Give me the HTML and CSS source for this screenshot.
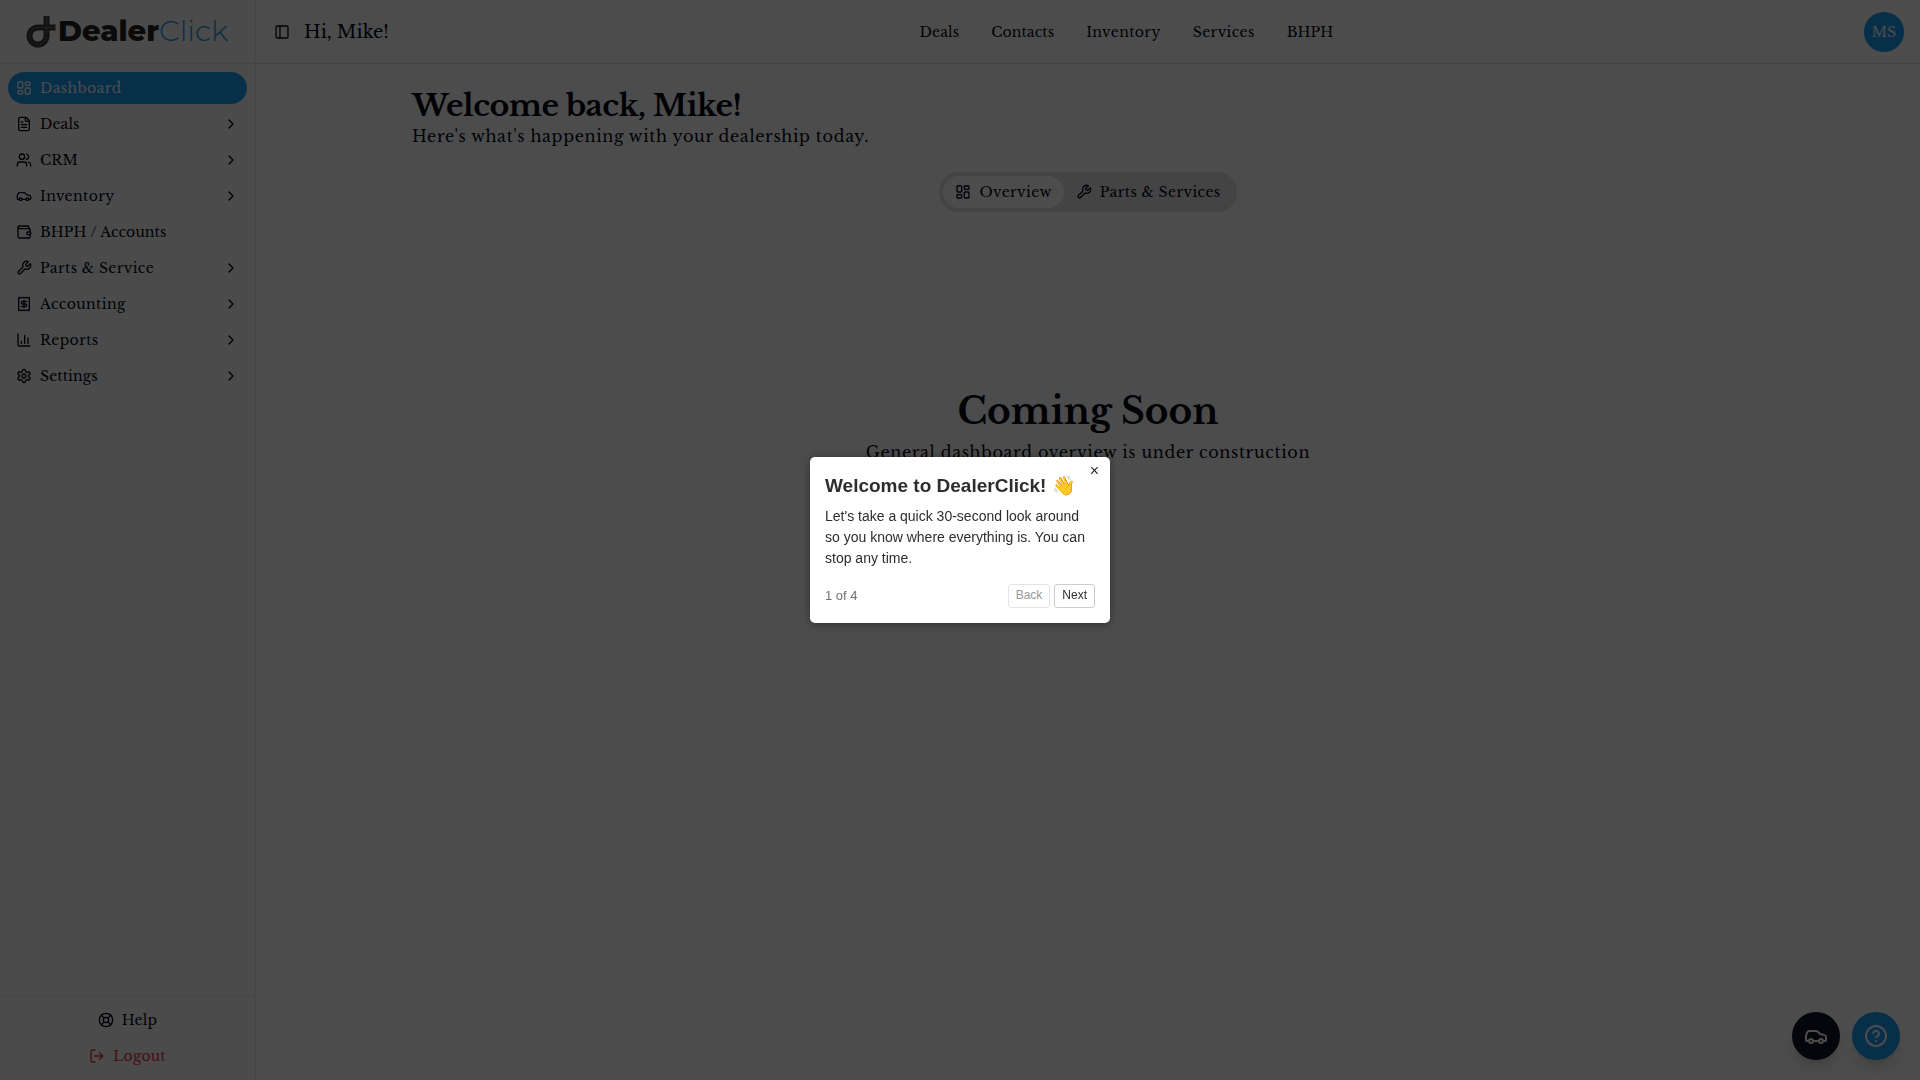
FILE: index.html
```
<!DOCTYPE html>
<html lang="en">
<head>
    <meta charset="UTF-8">
    <meta name="viewport" content="width=device-width, initial-scale=1.0">
    <title>DealerClick - Dashboard</title>
    <link rel="stylesheet" href="styles.css">
</head>
<body>
    <!-- Shared icons -->
    <svg class="sprite" xmlns="http://www.w3.org/2000/svg">
        <symbol id="i-dashboard" viewBox="0 0 24 24"><rect width="7" height="9" x="3" y="3" rx="1"/><rect width="7" height="5" x="14" y="3" rx="1"/><rect width="7" height="9" x="14" y="12" rx="1"/><rect width="7" height="5" x="3" y="16" rx="1"/></symbol>
        <symbol id="i-file" viewBox="0 0 24 24"><path d="M15 2H6a2 2 0 0 0-2 2v16a2 2 0 0 0 2 2h12a2 2 0 0 0 2-2V7Z"/><path d="M14 2v4a2 2 0 0 0 2 2h4M10 9H8M16 13H8M16 17H8"/></symbol>
        <symbol id="i-users" viewBox="0 0 24 24"><path d="M16 21v-2a4 4 0 0 0-4-4H6a4 4 0 0 0-4 4v2"/><circle cx="9" cy="7" r="4"/><path d="M22 21v-2a4 4 0 0 0-3-3.870M16 3.130a4 4 0 0 1 0 7.750"/></symbol>
        <symbol id="i-car" viewBox="0 0 24 24"><path d="M19 17h2c.6 0 1-.4 1-1v-3c0-.9-.7-1.700-1.500-1.900C18.700 10.600 16 10 16 10s-1.300-1.400-2.200-2.300c-.5-.4-1.100-.7-1.800-.7H5c-.6 0-1.100.4-1.400.9l-1.400 2.900A3.700 3.700 0 0 0 2 12v4c0 .6.4 1 1 1h2M9 17h6"/><circle cx="7" cy="17" r="2"/><circle cx="17" cy="17" r="2"/></symbol>
        <symbol id="i-wallet" viewBox="0 0 24 24"><path d="M19 7V4a1 1 0 0 0-1-1H5a2 2 0 0 0 0 4h15a1 1 0 0 1 1 1v4h-3a2 2 0 0 0 0 4h3a1 1 0 0 0 1-1v-2a1 1 0 0 0-1-1"/><path d="M3 5v14a2 2 0 0 0 2 2h15a1 1 0 0 0 1-1v-4"/></symbol>
        <symbol id="i-wrench" viewBox="0 0 24 24"><path d="M14.700 6.300a1 1 0 0 0 0 1.400l1.600 1.600a1 1 0 0 0 1.400 0l3.770-3.770a6 6 0 0 1-7.940 7.940l-6.910 6.910a2.120 2.120 0 0 1-3-3l6.910-6.910a6 6 0 0 1 7.940-7.940l-3.760 3.760z"/></symbol>
        <symbol id="i-receipt" viewBox="0 0 24 24"><path d="M4 2v20l2-1 2 1 2-1 2 1 2-1 2 1 2-1 2 1V2l-2 1-2-1-2 1-2-1-2 1-2-1-2 1Z"/><path d="M16 8h-6a2 2 0 1 0 0 4h4a2 2 0 1 1 0 4H8M12 17.500v-11"/></symbol>
        <symbol id="i-chart" viewBox="0 0 24 24"><path d="M3 3v16a2 2 0 0 0 2 2h16M18 17V9M13 17V5M8 17v-3"/></symbol>
        <symbol id="i-settings" viewBox="0 0 24 24"><path d="M12.220 2h-.44a2 2 0 0 0-2 2v.18a2 2 0 0 1-1 1.730l-.43.25a2 2 0 0 1-2 0l-.15-.08a2 2 0 0 0-2.730.73l-.22.38a2 2 0 0 0 .73 2.730l.15.1a2 2 0 0 1 1 1.720v.51a2 2 0 0 1-1 1.740l-.15.09a2 2 0 0 0-.73 2.730l.22.38a2 2 0 0 0 2.730.73l.15-.08a2 2 0 0 1 2 0l.43.25a2 2 0 0 1 1 1.730V20a2 2 0 0 0 2 2h.44a2 2 0 0 0 2-2v-.18a2 2 0 0 1 1-1.730l.43-.25a2 2 0 0 1 2 0l.15.08a2 2 0 0 0 2.730-.73l.22-.39a2 2 0 0 0-.73-2.730l-.15-.08a2 2 0 0 1-1-1.740v-.5a2 2 0 0 1 1-1.740l.15-.09a2 2 0 0 0 .73-2.730l-.22-.38a2 2 0 0 0-2.730-.73l-.15.08a2 2 0 0 1-2 0l-.43-.25a2 2 0 0 1-1-1.730V4a2 2 0 0 0-2-2z"/><circle cx="12" cy="12" r="3"/></symbol>
        <symbol id="i-chevron" viewBox="0 0 24 24"><path d="m9 18 6-6-6-6"/></symbol>
        <symbol id="i-panel" viewBox="0 0 24 24"><rect width="18" height="18" x="3" y="3" rx="2"/><path d="M9 3v18"/></symbol>
        <symbol id="i-life" viewBox="0 0 24 24"><circle cx="12" cy="12" r="10"/><path d="m4.930 4.930 4.240 4.240M14.830 9.170l4.240-4.240M14.830 14.830l4.240 4.240M9.170 14.830l-4.240 4.240"/><circle cx="12" cy="12" r="4"/></symbol>
        <symbol id="i-logout" viewBox="0 0 24 24"><path d="m16 17 5-5-5-5M21 12H9M9 21H5a2 2 0 0 1-2-2V5a2 2 0 0 1 2-2h4"/></symbol>
        <symbol id="i-help" viewBox="0 0 24 24"><circle cx="12" cy="12" r="10"/><path d="M9.090 9a3 3 0 0 1 5.830 1c0 2-3 3-3 3M12 17h.01"/></symbol>
    </svg>

    <div class="app">
        <aside class="sidebar">
            <div class="brand">
                <svg class="logo" width="206" height="40" viewBox="0 0 206 40">
                    <path class="road" d="M21.500 4v20a8.500 8.500 0 1 1-8.500-8.500h17.500"/>
                    <path class="road-line" d="M21.500 4v20a8.500 8.500 0 1 1-8.500-8.500h17.500"/>
                    <text class="logo-dealer" x="33" y="29" textLength="101" lengthAdjust="spacingAndGlyphs">Dealer</text>
                    <text class="logo-click" x="134" y="29" textLength="69" lengthAdjust="spacingAndGlyphs">Click</text>
                </svg>
            </div>
            <nav class="menu">
                <a class="menu-item active spaced"><svg class="icon"><use href="#i-dashboard"/></svg><span>Dashboard</span></a>
                <a class="menu-item"><svg class="icon"><use href="#i-file"/></svg><span>Deals</span><svg class="icon chevron"><use href="#i-chevron"/></svg></a>
                <a class="menu-item"><svg class="icon"><use href="#i-users"/></svg><span>CRM</span><svg class="icon chevron"><use href="#i-chevron"/></svg></a>
                <a class="menu-item spaced"><svg class="icon"><use href="#i-car"/></svg><span>Inventory</span><svg class="icon chevron"><use href="#i-chevron"/></svg></a>
                <a class="menu-item"><svg class="icon"><use href="#i-wallet"/></svg><span>BHPH / Accounts</span></a>
                <a class="menu-item spaced"><svg class="icon"><use href="#i-wrench"/></svg><span>Parts &amp; Service</span><svg class="icon chevron"><use href="#i-chevron"/></svg></a>
                <a class="menu-item spaced"><svg class="icon"><use href="#i-receipt"/></svg><span>Accounting</span><svg class="icon chevron"><use href="#i-chevron"/></svg></a>
                <a class="menu-item spaced"><svg class="icon"><use href="#i-chart"/></svg><span>Reports</span><svg class="icon chevron"><use href="#i-chevron"/></svg></a>
                <a class="menu-item"><svg class="icon"><use href="#i-settings"/></svg><span>Settings</span><svg class="icon chevron"><use href="#i-chevron"/></svg></a>
            </nav>
            <div class="sidebar-footer">
                <a class="footer-link"><svg class="icon"><use href="#i-life"/></svg><span>Help</span></a>
                <a class="footer-link logout"><svg class="icon"><use href="#i-logout"/></svg><span>Logout</span></a>
            </div>
        </aside>

        <div class="page">
            <header class="topbar">
                <div class="greeting">
                    <svg class="icon"><use href="#i-panel"/></svg>
                    <span>Hi, Mike!</span>
                </div>
                <nav class="top-nav">
                    <a>Deals</a>
                    <a>Contacts</a>
                    <a class="spaced">Inventory</a>
                    <a class="spaced">Services</a>
                    <a>BHPH</a>
                </nav>
                <div class="avatar">MS</div>
            </header>

            <main class="content">
                <h1>Welcome back, Mike!</h1>
                <p class="subtitle">Here's what's happening with your dealership today.</p>
                <div class="tabs">
                    <button class="tab selected"><svg class="icon"><use href="#i-dashboard"/></svg><span>Overview</span></button>
                    <button class="tab"><svg class="icon"><use href="#i-wrench"/></svg><span>Parts &amp; Services</span></button>
                </div>
                <section class="coming-soon">
                    <h2>Coming Soon</h2>
                    <p>General dashboard overview is under construction</p>
                </section>
            </main>
        </div>
    </div>

    <div class="fabs">
        <button class="fab dark"><svg><use href="#i-car"/></svg></button>
        <button class="fab"><svg><use href="#i-help"/></svg></button>
    </div>

    <!-- Product tour -->
    <div class="overlay">
        <div class="popover">
            <button class="popover-close">&times;</button>
            <div class="popover-title">Welcome to DealerClick! 👋</div>
            <div class="popover-text">Let's take a quick 30-second look around so you know where everything is. You can stop any time.</div>
            <div class="popover-footer">
                <span class="progress">1 of 4</span>
                <button class="popover-btn" disabled>Back</button>
                <button class="popover-btn">Next</button>
            </div>
        </div>
    </div>
</body>
</html>
```
FILE: styles.css
```
:root {
    --primary: #1b9df3;
    --foreground: #020817;
    --border: #e8e8e8;
    --muted: #e3e3e3;
    --danger: #ef2b3d;
}

* {
    box-sizing: border-box;
}

body {
    margin: 0;
    height: 100vh;
    overflow: hidden;
    background: #fff;
    color: var(--foreground);
    font-family: "Libre Baskerville", "Liberation Serif", serif;
    font-size: 14px;
    line-height: 20px;
    letter-spacing: 0.1px;
}

h1, h2, p {
    margin: 0;
}

button {
    font: inherit;
    color: inherit;
    letter-spacing: inherit;
    border: none;
    padding: 0;
}

.sprite {
    display: none;
}

.icon {
    width: 16px;
    height: 16px;
    flex-shrink: 0;
}

.icon, .fab svg {
    fill: none;
    stroke: currentColor;
    stroke-width: 2;
    stroke-linecap: round;
    stroke-linejoin: round;
}

.spaced {
    letter-spacing: 0.38px;
}

.app {
    display: flex;
    height: 100vh;
}

/* Sidebar */
.sidebar {
    width: 256px;
    display: flex;
    flex-direction: column;
    background: #fafafa;
    border-right: 1px solid var(--border);
}

.brand {
    height: 64px;
    display: flex;
    align-items: center;
    justify-content: center;
    border-bottom: 1px solid var(--border);
}

.logo {
    letter-spacing: 0;
}

.road {
    fill: none;
    stroke: #3c3c3e;
    stroke-width: 6;
}

.road-line {
    fill: none;
    stroke: #b5b5b5;
    stroke-width: 0.7;
    stroke-dasharray: 1.5 1.5;
}

.logo-dealer {
    font: 800 28px Montserrat, Inter, sans-serif;
    fill: #222;
}

.logo-click {
    font: 300 28px Montserrat, Lato, sans-serif;
    fill: var(--primary);
}

.menu {
    flex: 1;
    display: flex;
    flex-direction: column;
    gap: 4px;
    padding: 8px;
}

.menu-item {
    height: 32px;
    display: flex;
    align-items: center;
    gap: 8px;
    padding: 0 8px;
    border-radius: 16px;
}

.menu-item.active {
    background: var(--primary);
    color: #fff;
}

.chevron {
    margin-left: auto;
}

.sidebar-footer {
    display: flex;
    flex-direction: column;
    gap: 4px;
    padding: 8px;
    border-top: 1px solid var(--border);
}

.footer-link {
    height: 32px;
    display: flex;
    align-items: center;
    justify-content: center;
    gap: 8px;
    letter-spacing: 0.2px;
}

.logout {
    color: var(--danger);
}

/* Header */
.page {
    flex: 1;
}

.topbar {
    height: 64px;
    display: flex;
    align-items: center;
    justify-content: space-between;
    padding: 0 16px 0 18px;
    border-bottom: 1px solid var(--border);
}

.greeting {
    display: flex;
    align-items: center;
    gap: 14px;
    font-size: 18px;
    letter-spacing: 0;
}

.top-nav {
    display: flex;
    gap: 32px;
}

.avatar {
    width: 40px;
    height: 40px;
    border-radius: 50%;
    background: var(--primary);
    color: #fff;
    line-height: 40px;
    text-align: center;
}

/* Dashboard */
.content {
    max-width: 1400px;
    margin: 0 auto;
    padding: 24px;
    display: flex;
    flex-direction: column;
}

h1 {
    font-size: 30px;
    line-height: 36px;
    letter-spacing: -0.53px;
}

.subtitle, .coming-soon p {
    font-size: 16px;
    line-height: 24px;
    letter-spacing: 0.66px;
}

.tabs {
    align-self: center;
    display: flex;
    margin-top: 24px;
    padding: 4px;
    border-radius: 20px;
    background: var(--muted);
}

.tab {
    height: 32px;
    display: flex;
    align-items: center;
    gap: 8px;
    padding: 0 12px;
    border-radius: 16px;
    background: none;
    letter-spacing: 0.38px;
}

.tab.selected {
    background: #fff;
}

.coming-soon {
    margin-top: 180px;
    text-align: center;
}

.coming-soon h2 {
    font-size: 36px;
    line-height: 40px;
    letter-spacing: 0;
    margin-bottom: 8px;
}

/* Floating buttons */
.fabs {
    position: fixed;
    right: 20px;
    bottom: 20px;
    display: flex;
    gap: 12px;
}

.fab {
    width: 48px;
    height: 48px;
    display: flex;
    align-items: center;
    justify-content: center;
    border-radius: 50%;
    background: var(--primary);
    color: #fff;
    box-shadow: 0 10px 15px -3px rgba(0,0,0,0.15), 0 4px 6px -4px rgba(0,0,0,0.15);
}

.fab.dark {
    background: #0f172a;
}

.fab svg {
    width: 24px;
    height: 24px;
}

/* Tour popover */
.overlay {
    position: fixed;
    inset: 0;
    display: flex;
    align-items: center;
    justify-content: center;
    background: rgba(0,0,0,0.7);
}

.popover {
    position: relative;
    width: 300px;
    padding: 15px;
    border-radius: 5px;
    background: #fff;
    color: #2d2d2d;
    box-shadow: 0 1px 10px rgba(0,0,0,0.4);
    font-family: "Liberation Sans", Arial, sans-serif;
    letter-spacing: 0;
}

.popover-close {
    position: absolute;
    top: 0;
    right: 0;
    width: 32px;
    height: 28px;
    padding-left: 1px;
    background: none;
    font-size: 16px;
}

.popover-title {
    font-size: 19px;
    font-weight: 700;
    line-height: 28.5px;
}

.popover-text {
    margin-top: 5px;
    font-size: 14px;
    line-height: 21px;
}

.popover-footer {
    display: flex;
    align-items: center;
    gap: 4px;
    margin-top: 15px;
}

.progress {
    margin-right: auto;
    color: #727272;
    font-size: 13px;
}

.popover-btn {
    padding: 3px 7px;
    border: 1px solid #ccc;
    border-radius: 3px;
    background: #fff;
    font-size: 12px;
    line-height: 15.6px;
}

.popover-btn:disabled {
    opacity: 0.5;
}
```
